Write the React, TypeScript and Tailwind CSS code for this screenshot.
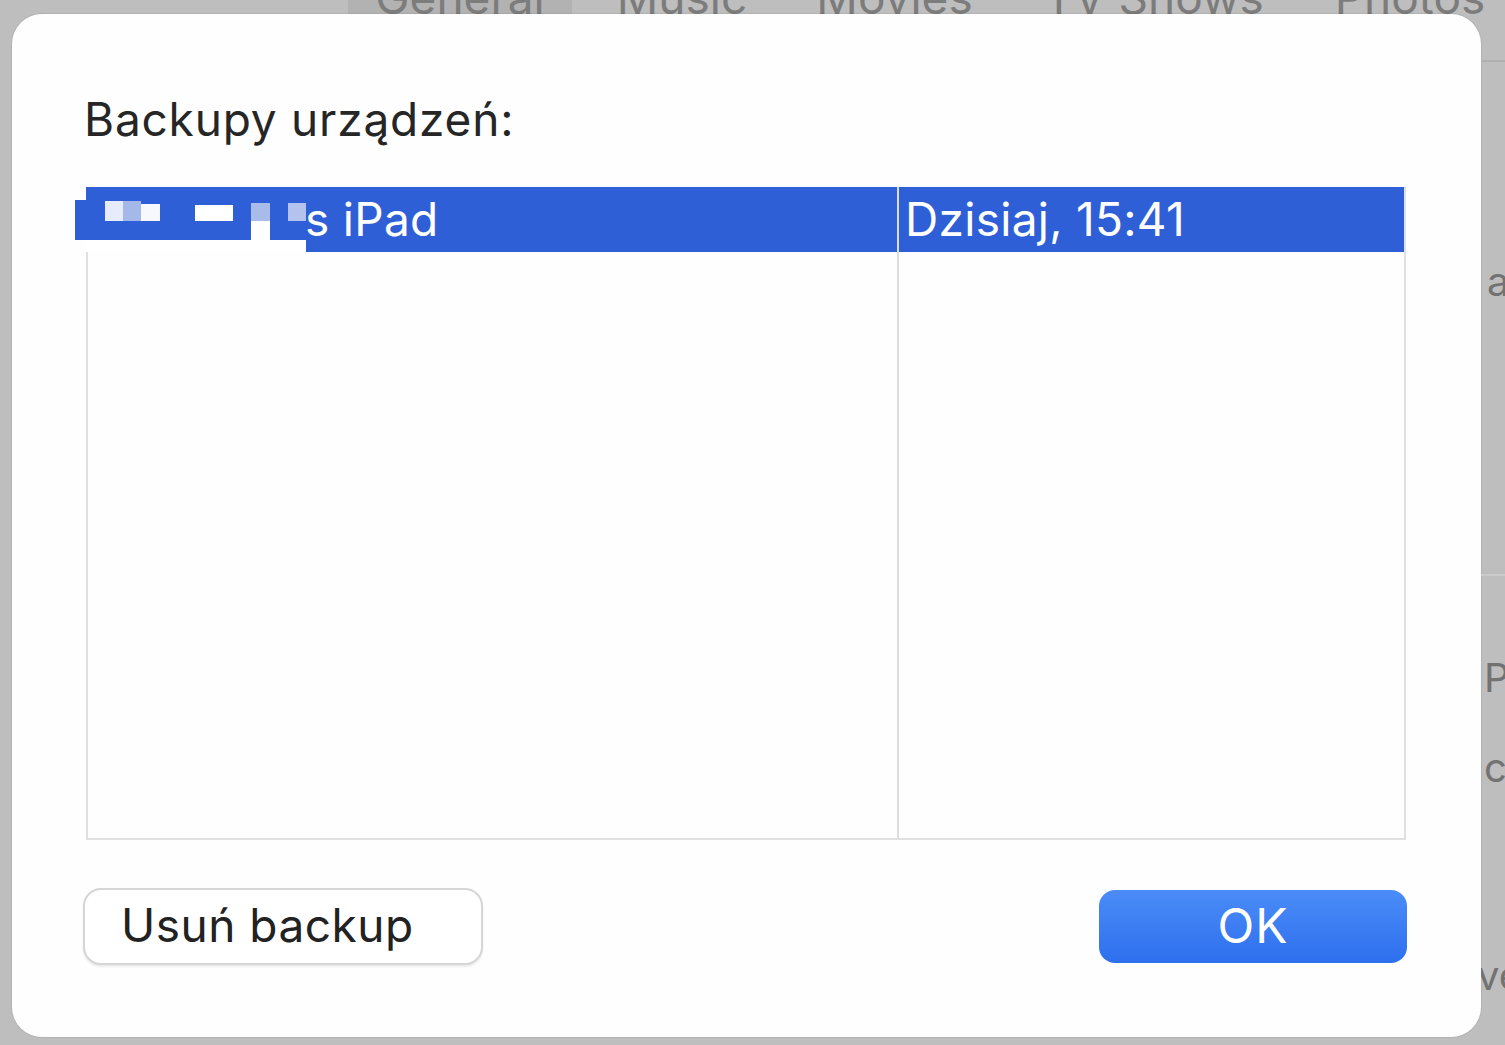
import type { JSX } from 'react'

const tabs = [
  { label: 'General', ml: 'ml-[348px]', w: 'w-[224px]', active: true },
  { label: 'Music', ml: 'ml-[45px]', w: 'w-[130px]', active: false },
  { label: 'Movies', ml: 'ml-[70px]', w: 'w-[155px]', active: false },
  { label: 'TV Shows', ml: 'ml-[72px]', w: 'w-[220px]', active: false },
  { label: 'Photos', ml: 'ml-[66px]', w: 'w-[160px]', active: false },
]

function Redaction(): JSX.Element {
  // pixelated blur over the owner's name
  return (
    <div className="pointer-events-none">
      <div className="absolute left-[-11px] top-[13px] h-[40px] w-[12px] bg-[#2f5fd6]" />
      <div className="absolute left-[-2px] top-[53px] h-[12px] w-[222px] bg-white" />
      <div className="absolute left-[165px] top-[34px] h-[19px] w-[19px] bg-white" />
      <div className="absolute left-[165px] top-[16px] h-[18px] w-[19px] bg-[#a9bbe8]" />
      <div className="absolute left-[19px] top-[14px] h-[20px] w-[18px] bg-[#e6ecfa]" />
      <div className="absolute left-[37px] top-[14px] h-[20px] w-[18px] bg-[#a4b8ea]" />
      <div className="absolute left-[55px] top-[17px] h-[17px] w-[19px] bg-[#f6f8fd]" />
      <div className="absolute left-[109px] top-[18px] h-[16px] w-[38px] bg-white" />
      <div className="absolute left-[202px] top-[16px] h-[18px] w-[18px] bg-[#b3c3ee]" />
    </div>
  )
}

export default function App(): JSX.Element {
  return (
    <div className="flex h-[1045px] w-[1505px] flex-col overflow-hidden bg-[#bebebe] font-['Inter','Liberation_Sans',sans-serif]">
      {/* window behind the sheet */}
      <div className="flex h-[14px] shrink-0 items-end overflow-hidden">
        {tabs.map((t) => (
          <div
            key={t.label}
            className={
              'flex h-[14px] shrink-0 items-end justify-center overflow-visible ' +
              t.ml +
              ' ' +
              t.w +
              (t.active ? ' bg-[#b2b2b2]' : '')
            }
          >
            <span className="-mb-[6px] whitespace-nowrap text-[46px] leading-[46px] text-[#7c7c7c]">{t.label}</span>
          </div>
        ))}
      </div>

      <div className="flex min-h-0 flex-1">
        <div className="w-[12px] shrink-0" />

        {/* sheet */}
        <div className="flex h-[1023px] w-[1469px] shrink-0 flex-col rounded-[30px] bg-[#fefefe] px-[74px] shadow-[0_0_0_1px_rgba(0,0,0,0.06)]">
          <h1 className="mt-[82px] -ml-[2px] text-[46px] leading-[46px] font-normal tracking-[0.8px] text-[#262626]">
            Backupy urządzeń:
          </h1>

          <div className="mt-[45px] flex h-[653px] w-[1320px] border-2 border-t-0 border-[#e0e0e0] text-[46px] leading-[46px] tracking-[0.3px] text-white">
            <div className="flex w-[813px] shrink-0 flex-col border-r-2 border-[#dcdcdc] -ml-[2px]">
              <div className="relative flex h-[65px] items-center bg-[#2f5fd6] pb-[2px] pl-[219px]">
                <Redaction />
                <span>s iPad</span>
              </div>
              <div className="flex-1" />
            </div>
            <div className="flex flex-1 flex-col">
              <div className="flex h-[65px] items-center bg-[#2f5fd6] pb-[2px] pl-[6px]">
                <span>Dzisiaj, 15:41</span>
              </div>
              <div className="flex-1" />
            </div>
          </div>

          <div className="mt-[48px] flex items-center justify-between">
            <button className="-ml-[3px] flex h-[77px] w-[400px] items-center rounded-[18px] border-2 border-[#d6d6d6] bg-white pb-[3px] pl-[36px] text-[46px] leading-[46px] tracking-[0.5px] text-[#222222] shadow-[0_2px_2px_rgba(0,0,0,0.08)]">
              Usuń backup
            </button>
            <button className="flex h-[73px] w-[308px] items-center justify-center rounded-[16px] bg-linear-to-b from-[#4b8cf8] to-[#2e6fee] pb-[2px] text-[48px] leading-[48px] tracking-[1px] text-white">
              OK
            </button>
          </div>
        </div>

        {/* edge of the window behind */}
        <div className="flex min-w-0 flex-1 flex-col overflow-hidden text-[40px] leading-[40px] text-[#727272]">
          <div className="mt-[46px] h-[2px] bg-[#b0b0b0]" />
          <span className="mt-[200px] pl-[6px]">a</span>
          <div className="mt-[272px] h-[2px] bg-[#cacaca]" />
          <span className="mt-[82px] pl-[3px]">P</span>
          <span className="mt-[50px] pl-[3px]">c</span>
          <span className="mt-[168px] -ml-[4px]">ve</span>
        </div>
      </div>
    </div>
  )
}
